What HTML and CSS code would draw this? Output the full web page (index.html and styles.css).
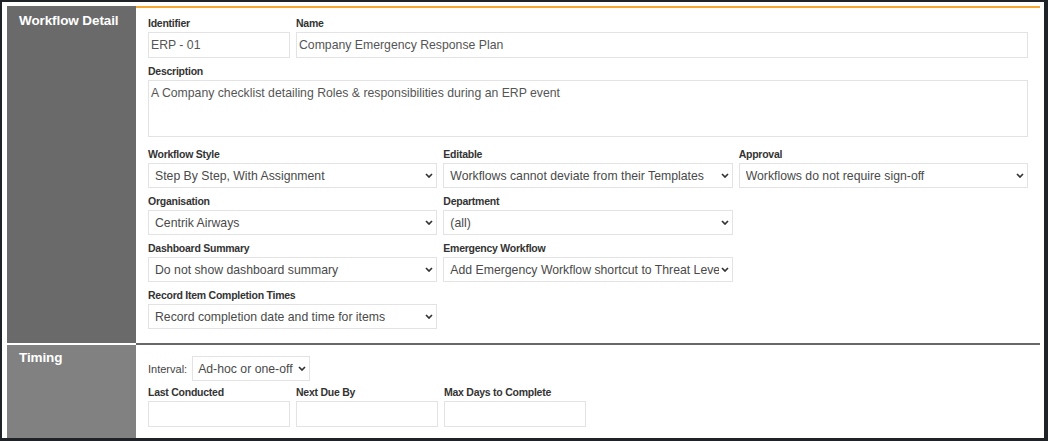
FILE: index.html
```html
<!DOCTYPE html>
<html lang="en">
<head>
<meta charset="utf-8">
<title>Workflow Detail</title>
<link rel="stylesheet" href="styles.css">
</head>
<body>
<div class="frame">
  <section class="section section--detail">
    <div class="side side--detail"><h2 class="side-title">Workflow Detail</h2></div>
    <div class="content content--detail">
      <div class="row">
        <div class="field field--id">
          <label class="lbl">Identifier</label>
          <input class="txt" type="text" value="ERP - 01">
        </div>
        <div class="field field--grow">
          <label class="lbl">Name</label>
          <input class="txt" type="text" value="Company Emergency Response Plan">
        </div>
      </div>
      <div class="row">
        <div class="field field--grow">
          <label class="lbl">Description</label>
          <textarea class="area">A Company checklist detailing Roles &amp; responsibilities during an ERP event</textarea>
        </div>
      </div>
      <div class="grid3">
        <div class="field">
          <label class="lbl">Workflow Style</label>
          <div class="sel"><select><option>Step By Step, With Assignment</option></select><svg class="chev" width="8" height="5" viewBox="0 0 8 5"><path d="M1 1 L4 4 L7 1" /></svg></div>
        </div>
        <div class="field">
          <label class="lbl">Editable</label>
          <div class="sel"><select><option>Workflows cannot deviate from their Templates</option></select><svg class="chev" width="8" height="5" viewBox="0 0 8 5"><path d="M1 1 L4 4 L7 1" /></svg></div>
        </div>
        <div class="field">
          <label class="lbl">Approval</label>
          <div class="sel"><select><option>Workflows do not require sign-off</option></select><svg class="chev" width="8" height="5" viewBox="0 0 8 5"><path d="M1 1 L4 4 L7 1" /></svg></div>
        </div>
        <div class="field">
          <label class="lbl">Organisation</label>
          <div class="sel"><select><option>Centrik Airways</option></select><svg class="chev" width="8" height="5" viewBox="0 0 8 5"><path d="M1 1 L4 4 L7 1" /></svg></div>
        </div>
        <div class="field">
          <label class="lbl">Department</label>
          <div class="sel"><select><option>(all)</option></select><svg class="chev" width="8" height="5" viewBox="0 0 8 5"><path d="M1 1 L4 4 L7 1" /></svg></div>
        </div>
        <div class="field empty"></div>
        <div class="field">
          <label class="lbl">Dashboard Summary</label>
          <div class="sel"><select><option>Do not show dashboard summary</option></select><svg class="chev" width="8" height="5" viewBox="0 0 8 5"><path d="M1 1 L4 4 L7 1" /></svg></div>
        </div>
        <div class="field">
          <label class="lbl">Emergency Workflow</label>
          <div class="sel"><select><option>Add Emergency Workflow shortcut to Threat Level page</option></select><svg class="chev" width="8" height="5" viewBox="0 0 8 5"><path d="M1 1 L4 4 L7 1" /></svg></div>
        </div>
        <div class="field empty"></div>
        <div class="field">
          <label class="lbl">Record Item Completion Times</label>
          <div class="sel"><select><option>Record completion date and time for items</option></select><svg class="chev" width="8" height="5" viewBox="0 0 8 5"><path d="M1 1 L4 4 L7 1" /></svg></div>
        </div>
      </div>
    </div>
  </section>
  <section class="section section--timing">
    <div class="side side--timing"><h2 class="side-title">Timing</h2></div>
    <div class="content content--timing">
      <div class="interval">
        <span class="interval-lbl">Interval:</span>
        <div class="sel sel--interval"><select><option>Ad-hoc or one-off</option></select><svg class="chev" width="8" height="5" viewBox="0 0 8 5"><path d="M1 1 L4 4 L7 1" /></svg></div>
      </div>
      <div class="row row--timing">
        <div class="field field--small">
          <label class="lbl">Last Conducted</label>
          <input class="txt" type="text" value="">
        </div>
        <div class="field field--small">
          <label class="lbl">Next Due By</label>
          <input class="txt" type="text" value="">
        </div>
        <div class="field field--small">
          <label class="lbl">Max Days to Complete</label>
          <input class="txt" type="text" value="">
        </div>
      </div>
    </div>
  </section>
</div>
</body>
</html>
```

FILE: styles.css
```css
* { box-sizing: border-box; }

html, body {
  margin: 0;
  padding: 0;
  background: #ffffff;
}

body {
  width: 1048px;
  height: 441px;
  overflow: hidden;
  font-family: "Liberation Sans", Arial, sans-serif;
}

.frame {
  width: 1048px;
  height: 441px;
  border-style: solid;
  border-color: #1f2327;
  border-width: 2px 4px 3px 2px;
  padding: 4px 4px 0 5px;
  background: #ffffff;
  display: flex;
  flex-direction: column;
}

.section {
  display: grid;
  grid-template-columns: 129px 1fr;
}

.section--detail {
  height: 337px;
}

.section--timing {
  flex: 1;
}

.side {
  background: #6a6a6a;
  padding: 6px 12px 0 12px;
}

.side--timing {
  background: #818181;
  border-top: 2px solid #ffffff;
  padding-top: 4px;
}

.side-title {
  margin: 0;
  font-size: 13.5px;
  line-height: 17px;
  font-weight: bold;
  color: #ffffff;
  letter-spacing: -0.1px;
}

.content {
  padding: 0 12px;
}

.content--detail {
  border-top: 2px solid #f7a731;
  padding-top: 8px;
}

.content--timing {
  border-top: 2px solid #686868;
  padding-top: 11px;
}

.row {
  display: flex;
  gap: 6px;
}

.row + .row {
  margin-top: 6px;
}

.field {
  display: flex;
  flex-direction: column;
}

.field--id {
  width: 142px;
}

.field--grow {
  flex: 1;
}

.field--small {
  width: 142px;
}

.lbl {
  display: block;
  font-size: 10.5px;
  letter-spacing: -0.25px;
  line-height: 14px;
  font-weight: bold;
  color: #333333;
  margin-bottom: 2px;
}

.txt {
  display: block;
  width: 100%;
  height: 26px;
  border: 1px solid #e3e3e3;
  padding: 0 2px;
  font-family: "Liberation Sans", Arial, sans-serif;
  font-size: 12.25px;
  color: #555555;
  background: #ffffff;
  outline: none;
}

.area {
  display: block;
  width: 100%;
  height: 57px;
  border: 1px solid #e3e3e3;
  padding: 5px 2px;
  margin: 0 0 4px 0;
  font-family: "Liberation Sans", Arial, sans-serif;
  font-size: 12.25px;
  color: #555555;
  resize: none;
  outline: none;
}

.grid3 {
  display: grid;
  grid-template-columns: repeat(3, 1fr);
  column-gap: 6px;
  row-gap: 6px;
  margin-top: 6px;
}

.sel {
  position: relative;
  height: 25px;
}

.sel select {
  -webkit-appearance: none;
  appearance: none;
  display: block;
  width: 100%;
  height: 25px;
  border: 1px solid #e3e3e3;
  border-radius: 0;
  background: #ffffff;
  padding: 0 13px 0 6px;
  font-family: "Liberation Sans", Arial, sans-serif;
  font-size: 12.25px;
  color: #4a4a4a;
  outline: none;
}

.chev {
  position: absolute;
  right: 4px;
  top: 10px;
  pointer-events: none;
}

.chev path {
  fill: none;
  stroke: #333333;
  stroke-width: 1.7;
}

.interval {
  display: flex;
  align-items: center;
  gap: 5px;
}

.interval-lbl {
  font-size: 11px;
  color: #444444;
}

.sel--interval {
  width: 118px;
}

.sel--interval select {
  padding-left: 5px;
}

.row--timing {
  margin-top: 4px;
}
```
